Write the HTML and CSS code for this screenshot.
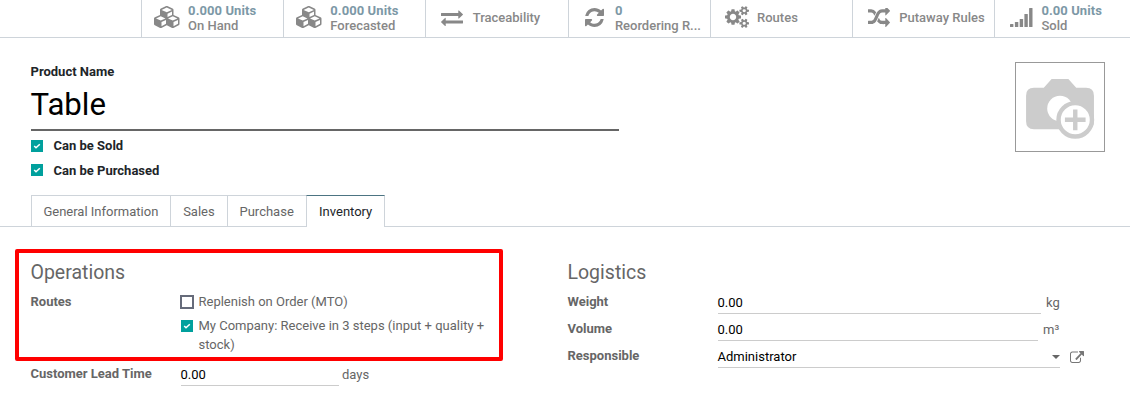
FILE: index.html
```html
<!DOCTYPE html>
<html lang="en">
<head>
<meta charset="utf-8">
<title>Table - Product</title>
<link rel="stylesheet" href="styles.css">
</head>
<body>
<header class="stats">
  <div class="stat">
    <span class="stat-icon cubes"><svg width="27" height="22" viewBox="0 0 2304 1780" preserveAspectRatio="none"><path d="M640 1632l384-192v-314l-384 164v342zm-64-454l404-173-404-173-404 173zm1088 454l384-192v-314l-384 164v342zm-64-454l404-173-404-173-404 173zm-448-293l384-165v-266l-384 164v267zm-64-379l441-189-441-189-441 189zm1088 518v416q0 36-19 67t-52 47l-448 224q-25 14-57 14t-57-14l-448-224q-5-2-7-4-2 2-7 4l-448 224q-25 14-57 14t-57-14l-448-224q-33-16-52-47t-19-67v-416q0-38 21.5-70t56.5-48l434-186v-400q0-38 21.5-70t56.5-48l448-192q23-10 50-10t50 10l448 192q35 16 56.5 48t21.5 70v400l434 186q36 16 57 48t21 70z"/></svg></span>
    <span class="stat-text"><b>0.000 Units</b><span>On Hand</span></span>
  </div>
  <div class="stat">
    <span class="stat-icon cubes"><svg width="27" height="22" viewBox="0 0 2304 1780" preserveAspectRatio="none"><path d="M640 1632l384-192v-314l-384 164v342zm-64-454l404-173-404-173-404 173zm1088 454l384-192v-314l-384 164v342zm-64-454l404-173-404-173-404 173zm-448-293l384-165v-266l-384 164v267zm-64-379l441-189-441-189-441 189zm1088 518v416q0 36-19 67t-52 47l-448 224q-25 14-57 14t-57-14l-448-224q-5-2-7-4-2 2-7 4l-448 224q-25 14-57 14t-57-14l-448-224q-33-16-52-47t-19-67v-416q0-38 21.5-70t56.5-48l434-186v-400q0-38 21.5-70t56.5-48l448-192q23-10 50-10t50 10l448 192q35 16 56.5 48t21.5 70v400l434 186q36 16 57 48t21 70z"/></svg></span>
    <span class="stat-text"><b>0.000 Units</b><span>Forecasted</span></span>
  </div>
  <div class="stat">
    <span class="stat-icon"><svg width="22" height="17" viewBox="0 160 1792 1472" preserveAspectRatio="none"><path d="M1792 1184v192q0 13-9.5 22.5t-22.5 9.5h-1376v192q0 13-9.500 22.500t-22.500 9.500q-12 0-24-10l-319-320q-9-9-9-22 0-14 9-23l320-320q9-9 23-9 13 0 22.500 9.500t9.500 22.500v192h1376q13 0 22.500 9.500t9.500 22.500zm0-544q0 14-9 23l-320 320q-9 9-23 9-13 0-22.500-9.500t-9.500-22.500v-192h-1376q-13 0-22.500-9.500t-9.500-22.500v-192q0-13 9.500-22.500t22.500-9.500h1376v-192q0-14 9-23t23-9q12 0 24 10l319 319q9 9 9 23z"/></svg></span>
    <span class="stat-text"><span>Traceability</span></span>
  </div>
  <div class="stat">
    <span class="stat-icon"><svg width="19" height="19" viewBox="128 128 1536 1536"><path d="M1639 1056q0 5-1 7-64 268-268 434.500t-478 166.500q-146 0-282.500-55t-243.500-157l-129 129q-19 19-45 19t-45-19-19-45v-448q0-26 19-45t45-19h448q26 0 45 19t19 45-19 45l-137 137q71 66 161 102t187 36q134 0 250-65t186-179q11-17 53-117 8-23 30-23h192q13 0 22.500 9.500t9.500 22.500zm25-800v448q0 26-19 45t-45 19h-448q-26 0-45-19t-19-45 19-45l138-138q-148-137-349-137-134 0-250 65t-186 179q-11 17-53 117-8 23-30 23h-199q-13 0-22.500-9.500t-9.500-22.500v-7q65-268 270-434.500t480-166.500q146 0 284 55.500t245 156.500l130-129q19-19 45-19t45 19 19 45z"/></svg></span>
    <span class="stat-text"><b>0</b><span>Reordering R...</span></span>
  </div>
  <div class="stat">
    <span class="stat-icon"><svg width="24" height="22" viewBox="0 0 1920 1792" preserveAspectRatio="none"><path d="M896 896q0-106-75-181t-181-75-181 75-75 181 75 181 181 75 181-75 75-181zm768 512q0-52-38-90t-90-38-90 38-38 90q0 53 37.500 90.500t90.500 37.500 90.500-37.500 37.500-90.500zm0-1024q0-52-38-90t-90-38-90 38-38 90q0 53 37.500 90.500t90.500 37.500 90.500-37.500 37.500-90.500zm-384 421v185q0 10-7 19.500t-16 10.500l-155 24q-11 35-32 76 34 48 90 115 7 11 7 20 0 12-7 19-23 30-82.500 89.500t-78.500 59.500q-11 0-21-7l-115-90q-37 19-77 31-11 108-23 155-7 24-30 24h-186q-11 0-20-7.500t-10-17.500l-23-153q-34-10-75-31l-118 89q-7 7-20 7-11 0-21-8-144-133-144-160 0-9 7-19 10-14 41-53t47-61q-23-44-35-82l-152-24q-10-1-17-9.500t-7-19.500v-185q0-10 7-19.500t16-10.500l155-24q11-35 32-76-34-48-90-115-7-11-7-20 0-12 7-20 22-30 82-89t79-59q11 0 21 7l115 90q34-18 77-32 11-108 23-154 7-24 30-24h186q11 0 20 7.500t10 17.500l23 153q34 10 75 31l118-89q8-7 20-7 11 0 21 8 144 133 144 160 0 8-7 19-12 16-42 54t-45 60q23 48 34 82l152 23q10 2 17 10.500t7 19.500zm640 533v140q0 16-149 31-12 27-30 52 51 113 51 138 0 4-4 7-122 71-124 71-8 0-46-47t-52-68q-20 2-30 2t-30-2q-14 21-52 68t-46 47q-2 0-124-71-4-3-4-7 0-25 51-138-18-25-30-52-149-15-149-31v-140q0-16 149-31 13-29 30-52-51-113-51-138 0-4 4-7 4-2 35-20t59-34 30-16q8 0 46 46.500t52 67.500q20-2 30-2t30 2q51-71 92-112l6-2q4 0 124 70 4 3 4 7 0 25-51 138 17 23 30 52 149 15 149 31zm0-1024v140q0 16-149 31-12 27-30 52 51 113 51 138 0 4-4 7-122 71-124 71-8 0-46-47t-52-68q-20 2-30 2t-30-2q-14 21-52 68t-46 47q-2 0-124-71-4-3-4-7 0-25 51-138-18-25-30-52-149-15-149-31v-140q0-16 149-31 13-29 30-52-51-113-51-138 0-4 4-7 4-2 35-20t59-34 30-16q8 0 46 46.500t52 67.500q20-2 30-2t30 2q51-71 92-112l6-2q4 0 124 70 4 3 4 7 0 25-51 138 17 23 30 52 149 15 149 31z"/></svg></span>
    <span class="stat-text"><span>Routes</span></span>
  </div>
  <div class="stat">
    <span class="stat-icon"><svg width="22" height="19" viewBox="0 160 1792 1472" preserveAspectRatio="none"><path d="M666 481q-60 92-137 273-22-45-37-72.500t-40.500-63.500-51-56.500-63-35-81.500-14.500h-224q-14 0-23-9t-9-23v-192q0-14 9-23t23-9h224q250 0 410 225zm1126 799q0 14-9 23l-320 320q-9 9-23 9-13 0-22.500-9.500t-9.500-22.500v-192q-32 0-85 .5t-81 1-73-1-71-5-64-10.500-63-18.500-58-28.500-59-40-55-53.500-56-69.500q59-93 136-273 22 45 37 72.500t40.500 63.500 51 56.500 63 35 81.500 14.500h256v-192q0-14 9-23t23-9q12 0 24 10l319 319q9 9 9 23zm0-896q0 14-9 23l-320 320q-9 9-23 9-13 0-22.500-9.500t-9.500-22.500v-192h-256q-48 0-87 15t-69 45-51 61.500-45 77.500q-32 62-78 171-29 66-49.500 111t-54 105-64 100-74 83-90 68.500-106.500 42-128 16.500h-224q-14 0-23-9t-9-23v-192q0-14 9-23t23-9h224q48 0 87-15t69-45 51-61.500 45-77.500q32-62 78-171 29-66 49.500-111t54-105 64-100 74-83 90-68.500 106.500-42 128-16.500h256v-192q0-14 9-23t23-9q12 0 24 10l319 319q9 9 9 23z"/></svg></span>
    <span class="stat-text"><span>Putaway Rules</span></span>
  </div>
  <div class="stat">
    <span class="stat-icon"><svg width="23" height="19" viewBox="0 0 23 19"><rect x="0" y="16" width="3.400" height="3" rx=".5"/><rect x="4.900" y="14" width="3.400" height="5" rx=".5"/><rect x="9.700" y="11" width="3.400" height="8" rx=".5"/><rect x="14.400" y="6" width="3.400" height="13" rx=".5"/><rect x="19.100" y="0" width="3.400" height="19" rx=".5"/></svg></span>
    <span class="stat-text"><b>0.00 Units</b><span>Sold</span></span>
  </div>
</header>

<section class="title">
  <div class="title-main">
    <label class="name-label">Product Name</label>
    <div class="name">Table</div>
    <div class="check bold"><span class="box on"><svg width="8" height="8" viewBox="0 0 8 8"><path d="M1.200 4l1.800 1.800L6.800 2.200"/></svg></span>Can be Sold</div>
    <div class="check bold"><span class="box on"><svg width="8" height="8" viewBox="0 0 8 8"><path d="M1.200 4l1.800 1.800L6.800 2.200"/></svg></span>Can be Purchased</div>
  </div>
  <div class="photo">
    <svg width="69" height="61" viewBox="0 0 70 62">
      <path fill="#ccc" d="M8 9h10l8-9h17l8 9h10q8 0 8 8v26q0 8-8 8H8q-8 0-8-8V17q0-8 8-8z"/>
      <circle cx="34.500" cy="30" r="13" fill="#fff"/>
      <circle cx="50" cy="41.500" r="17" fill="#fff" stroke="#ccc" stroke-width="4.500"/>
      <path d="M50 31v21M39.500 41.500h21" stroke="#ccc" stroke-width="4.500"/>
    </svg>
  </div>
</section>

<nav class="tabs">
  <span class="tab">General Information</span><span class="tab">Sales</span><span class="tab">Purchase</span><span class="tab active">Inventory</span>
</nav>

<main class="groups">
  <section class="group operations">
    <h2>Operations</h2>
    <div class="row routes">
      <label>Routes</label>
      <div class="options">
        <div class="option"><span class="box"></span><span>Replenish on Order (MTO)</span></div>
        <div class="option"><span class="box on"><svg width="8" height="8" viewBox="0 0 8 8"><path d="M1.200 4l1.800 1.800L6.800 2.200"/></svg></span><span>My Company: Receive in 3 steps (input + quality + stock)</span></div>
      </div>
    </div>
    <div class="row lead">
      <label>Customer Lead Time</label>
      <span class="input">0.00</span><span class="unit">days</span>
    </div>
    <div class="highlight"></div>
  </section>
  <section class="group logistics">
    <h2>Logistics</h2>
    <div class="row"><label>Weight</label><span class="input weight">0.00</span><span class="unit">kg</span></div>
    <div class="row"><label>Volume</label><span class="input volume">0.00</span><span class="unit">m³</span></div>
    <div class="row"><label>Responsible</label><span class="input person">Administrator<i class="caret"></i></span>
      <svg class="link" width="14" height="12" viewBox="0 64 1792 1480" preserveAspectRatio="none"><path d="M1408 928v320q0 119-84.500 203.500t-203.500 84.500h-832q-119 0-203.500-84.500t-84.500-203.500v-832q0-119 84.500-203.500t203.500-84.500h704q14 0 23 9t9 23v64q0 14-9 23t-23 9h-704q-66 0-113 47t-47 113v832q0 66 47 113t113 47h832q66 0 113-47t47-113v-320q0-14 9-23t23-9h64q14 0 23 9t9 23zm384-800v512q0 26-19 45t-45 19-45-19l-176-176-652 652q-10 10-23 10t-23-10l-114-114q-10-10-10-23t10-23l652-652-176-176q-19-19-19-45t19-45 45-19h512q26 0 45 19t19 45z"/></svg>
    </div>
  </section>
</main>
</body>
</html>
```
FILE: styles.css
```css
* { box-sizing: border-box; }
body {
  margin: 0;
  height: 401px;
  overflow: hidden;
  background: #fff;
  color: #666;
  font: 13px/19.5px Roboto, sans-serif;
}
svg { display: block; flex: none; }

.stats {
  display: flex;
  height: 38px;
  padding-left: 141px;
  border-bottom: 1px solid #ced4da;
}
.stat {
  display: flex;
  align-items: center;
  flex: none;
  width: 142.2px;
  border-left: 1px solid #ced4da;
  color: #888;
  font-weight: 500;
  line-height: 15px;
}
.stat-icon {
  display: flex;
  justify-content: center;
  flex: none;
  width: 52px;
  margin-right: -5.700px;
  padding-bottom: 3px;
}
.stat-icon.cubes { width: 50px; margin-right: -3.900px; }
.stat-icon svg { fill: #888; }
.stat-text { display: flex; flex-direction: column; padding-bottom: 2px; white-space: nowrap; }
.stat-text b { font-weight: 700; color: #7c98a6; letter-spacing: 0.08px; }

.title {
  display: flex;
  justify-content: space-between;
  height: 157px;
  padding: 24px 25px 0 30.500px;
}
.title-main { width: 588px; color: #212529; }
.name-label { display: block; font-weight: 700; }
.name {
  height: 49px;
  margin-bottom: 5px;
  border-bottom: 2px solid #666;
  color: #000;
  font-size: 31.200px;
  line-height: 46px;
}
.check { display: flex; align-items: center; height: 20px; margin-bottom: 5px; }
.bold { font-weight: 700; }
.box {
  display: flex;
  align-items: center;
  justify-content: center;
  flex: none;
  width: 14px;
  height: 14px;
  border: 2px solid #666b7a;
}
.box.on { width: 12px; height: 12px; border: 0; background: #00a09d; }
.box svg { fill: none; stroke: #fff; stroke-width: 1.5; }
.check .box { margin-right: 11px; }
.check + .check .box { margin-top: -1px; }
.photo {
  display: flex;
  align-items: center;
  justify-content: center;
  width: 90px;
  height: 90px;
  padding: 4px 0 0 1px;
  border: 1px solid #999;
}

.tabs { display: flex; height: 32px; padding-left: 30.500px; border-bottom: 1px solid #ced4da; }
.tab {
  height: 31px;
  padding: 6px 11.900px 0;
  border: 1px solid #ced4da;
  border-width: 1px 0 0 1px;
}
.tab.active {
  height: 32px;
  padding: 6px 11.500px 0 12.400px;
  border-width: 1px 1px 0;
  border-top-color: #4c7482;
  background: #fff;
  color: #212529;
}

.groups { display: flex; padding: 32px 0 0 30.500px; }
.group { width: 537px; }
h2 { margin: 0 0 4px; padding-top: 1px; font-size: 19.500px; font-weight: 400; line-height: 26px; }
.row { display: flex; height: 27px; }
.row label { flex: none; width: 150px; padding-top: 7px; line-height: 19px; margin-top: -5px; font-weight: 700; }
.routes { height: 72px; }
.options { width: 330px; }
.option { display: flex; align-items: flex-start; margin-bottom: 5px; line-height: 19px; padding-top: 2px; }
.option + .option { margin-top: -2px; }
.option .box { margin: 3px 5px 0 -1px; }
.option .box.on { margin: 4px 6px 0 0; }
.input {
  display: flex;
  justify-content: space-between;
  width: 158px;
  height: 24px;
  padding-top: 3px;
  border-bottom: 1px solid #ccc;
  color: #000;
}
.unit { padding: 3px 0 0 3.500px; }
.weight { width: 323px; }
.volume { width: 320px; }
.weight + .unit, .volume + .unit { padding-left: 5.500px; }
.person { width: 342px; }
.caret {
  width: 0;
  height: 0;
  margin: 8px 0 0;
  border: 4px solid transparent;
  border-top-color: #666;
  border-bottom: 0;
}
.link { margin: 7px 0 0 10.500px; fill: #777; }

/* Annotation frame drawn over the form. */
.highlight {
  position: absolute;
  left: 15px;
  top: 249px;
  width: 488px;
  height: 112px;
  border: 4px solid #f00;
  border-radius: 2px;
}
```
